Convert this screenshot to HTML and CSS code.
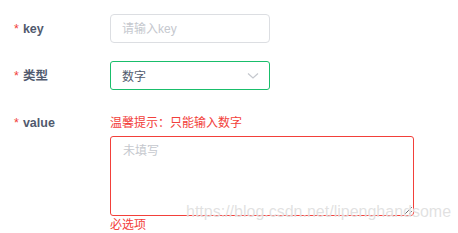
FILE: index.html
```html
<!DOCTYPE html>
<html lang="zh">
<head>
    <meta charset="UTF-8">
    <title>表单</title>
    <link rel="stylesheet" href="styles.css">
</head>
<body>
    <form class="form">
        <div class="form-item">
            <label class="form-label"><span class="req">*</span>key</label>
            <div class="form-content">
                <input class="input" type="text" placeholder="请输入key">
            </div>
        </div>
        <div class="form-item">
            <label class="form-label"><span class="req">*</span>类型</label>
            <div class="form-content">
                <div class="select">
                    <span>数字</span>
                    <svg class="arrow" width="12" height="8" viewBox="0 0 12 8"><path d="M1 1.5 L6 6 L11 1.5" fill="none" stroke="#c5c8ce" stroke-width="1.2"/></svg>
                </div>
            </div>
        </div>
        <div class="form-item form-item-top">
            <label class="form-label"><span class="req">*</span>value</label>
            <div class="form-content">
                <div class="tip">温馨提示：只能输入数字</div>
                <textarea class="textarea" placeholder="未填写"></textarea>
                <div class="error">必选项</div>
            </div>
        </div>
    </form>
    <div class="watermark">https://blog.csdn.net/lipenghandsome</div>
</body>
</html>
```

FILE: styles.css
```css
body {
    margin: 0;
    background: #fff;
    font-family: "Liberation Sans", Arial, "Noto Sans CJK SC", sans-serif;
    font-size: 12px;
    color: #515a6e;
    position: relative;
    height: 233px;
    overflow: hidden;
}
.form {
    padding: 14px 0 0 14px;
}
.form-item {
    display: flex;
    align-items: center;
    margin-bottom: 18px;
}
.form-item-top {
    align-items: flex-start;
    margin-top: 25px;
    margin-bottom: 0;
}
.form-label {
    width: 96px;
    font-weight: bold;
    font-size: 12.5px;
    line-height: 16px;
    color: #515a6e;
}
.req {
    color: #f2403a;
    font-weight: normal;
    margin-right: 4px;
}
.input {
    box-sizing: border-box;
    width: 160px;
    height: 29px;
    border: 1px solid #dcdee2;
    border-radius: 4px;
    padding: 0 11px;
    font-family: inherit;
    font-size: 12px;
    outline: none;
}
.input::placeholder {
    color: #c5c8ce;
}
.select {
    box-sizing: border-box;
    width: 160px;
    height: 29px;
    border: 1px solid #19be6b;
    border-radius: 3px;
    padding: 0 11px;
    display: flex;
    align-items: center;
    justify-content: space-between;
    color: #515a6e;
}
.arrow {
    margin-right: -1px;
}
.tip {
    color: #f2403a;
    line-height: 16px;
    margin-bottom: 5px;
}
.textarea {
    display: block;
    box-sizing: border-box;
    width: 304px;
    height: 80px;
    border: 1px solid #f2403a;
    border-radius: 3px;
    padding: 4px 12px;
    font-family: inherit;
    font-size: 12px;
    color: #515a6e;
    resize: both;
    outline: none;
}
.textarea::placeholder {
    color: #c5c8ce;
}
.error {
    color: #f2403a;
    line-height: 16px;
    margin-top: 1px;
}
.watermark {
    position: absolute;
    left: 186px;
    top: 203px;
    font-size: 16px;
    color: rgba(205, 205, 205, 0.6);
    text-shadow: 0 0 1px #fff;
    pointer-events: none;
}
```
